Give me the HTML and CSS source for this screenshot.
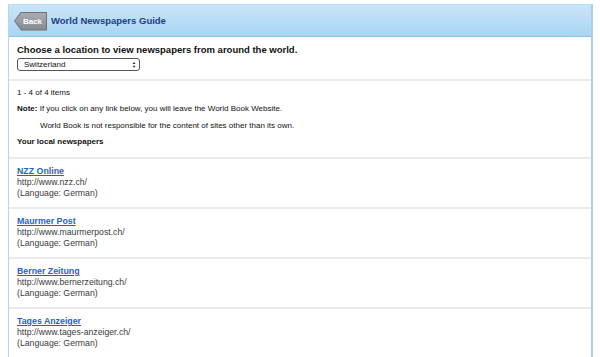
FILE: index.html
```html
<!DOCTYPE html>
<html>
<head>
<meta charset="utf-8">
<link rel="stylesheet" href="styles.css">
</head>
<body>
<div class="frame">
  <div class="header">
    <span class="back"><span class="back-inner">Back</span></span>
    <h1 class="title">World Newspapers Guide</h1>
  </div>
  <div class="section chooser">
    <p class="choose">Choose a location to view newspapers from around the world.</p>
    <div class="select"><span>Switzerland</span><span class="arrows">&#9650;<br>&#9660;</span></div>
  </div>
  <div class="section info">
    <p class="count">1 - 4 of 4 items</p>
    <p class="note"><b>Note:</b> If you click on any link below, you will leave the World Book Website.</p>
    <p class="note indent">World Book is not responsible for the content of sites other than its own.</p>
    <p class="local">Your local newspapers</p>
  </div>
  <div class="section item">
    <a class="name" href="#">NZZ Online</a>
    <div class="url">http://www.nzz.ch/</div>
    <div class="lang">(Language: German)</div>
  </div>
  <div class="section item">
    <a class="name" href="#">Maurmer Post</a>
    <div class="url">http://www.maurmerpost.ch/</div>
    <div class="lang">(Language: German)</div>
  </div>
  <div class="section item">
    <a class="name" href="#">Berner Zeitung</a>
    <div class="url">http://www.bernerzeitung.ch/</div>
    <div class="lang">(Language: German)</div>
  </div>
  <div class="section item last">
    <a class="name" href="#">Tages Anzeiger</a>
    <div class="url">http://www.tages-anzeiger.ch/</div>
    <div class="lang">(Language: German)</div>
  </div>
</div>
</body>
</html>
```

FILE: styles.css
```css
html, body {
  margin: 0;
  padding: 0;
  background: #ffffff;
  font-family: "Liberation Sans", Arial, sans-serif;
  color: #111;
  overflow: hidden;
}
.frame {
  margin: 4px 0 0 8px;
  width: 582px;
  height: 353px;
  border-left: 1px solid #b3d8ec;
  border-right: 2px solid #a8d0e4;
  border-top: 1px solid #b9dcf0;
}
.header {
  height: 31px;
  background: linear-gradient(#c9e5f8, #a9d5f4);
  border-bottom: 1px solid #8cc2ea;
  display: flex;
  align-items: center;
  padding-left: 5px;
  gap: 4px;
}
.back {
  display: inline-block;
  width: 33px;
  height: 19px;
  background: #6e7278;
  clip-path: polygon(7px 0, 100% 0, 100% 100%, 7px 100%, 0 50%);
  position: relative;
  margin-top: 1px;
}
.back-inner {
  position: absolute;
  inset: 1px 1px 1px 1px;
  background: linear-gradient(#a9adb2, #858a90);
  clip-path: polygon(6.5px 0, 100% 0, 100% 100%, 6.5px 100%, 0 50%);
  color: #fff;
  font-size: 8px;
  font-weight: bold;
  display: flex;
  align-items: center;
  justify-content: center;
  padding-left: 4px;
  box-sizing: border-box;
}
.title {
  margin: 0;
  font-size: 9.5px;
  font-weight: bold;
  color: #1c3f82;
}
.section {
  border-bottom: 2px solid #ebebe8;
  padding-left: 8px;
}
.chooser {
  height: 41px;
  padding-top: 1px;
}
.choose {
  margin: 6px 0 3px;
  font-size: 9.5px;
  font-weight: bold;
}
.select {
  width: 112px;
  height: 11px;
  border: 1px solid #555;
  border-radius: 3px;
  display: flex;
  justify-content: space-between;
  align-items: center;
  padding: 0 3px 0 6px;
  font-size: 8px;
  box-sizing: content-box;
}
.arrows {
  font-size: 4px;
  line-height: 4px;
  text-align: center;
}
.info {
  height: 76px;
  padding-top: 0;
}
.info p {
  margin: 0;
  font-size: 8px;
  line-height: 10px;
}
.count { padding-top: 7px; }
.note { padding-top: 6px; }
.indent { padding-left: 23px; padding-top: 7px !important; }
.local { font-weight: bold; padding-top: 6px; }
.item {
  height: 42px;
  padding-top: 6px;
  font-size: 8.7px;
  line-height: 11px;
  color: #333;
}
.item.last { border-bottom: none; }
.name {
  color: #1f63c6;
  font-weight: bold;
  text-decoration: underline;
  font-size: 8.8px;
  line-height: 12px;
}
.url, .lang { color: #3a3a3a; }
```
